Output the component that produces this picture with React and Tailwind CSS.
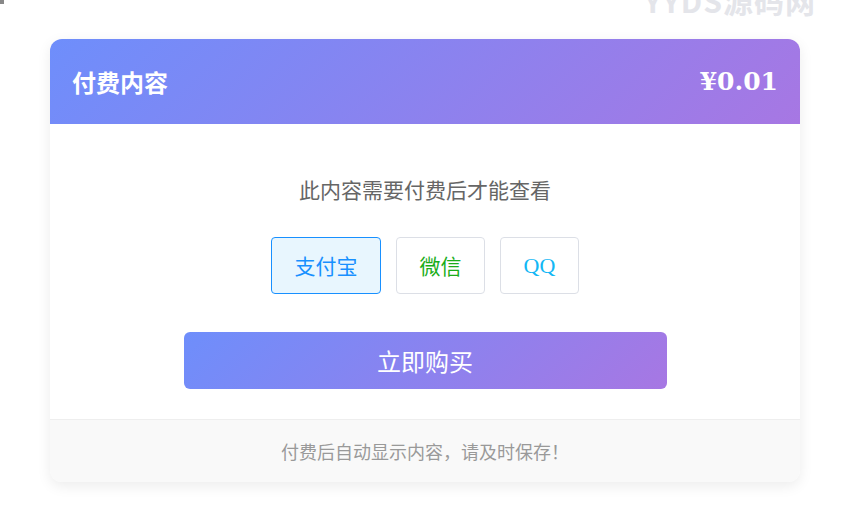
import React, { useState } from 'react'

const methods = [
  { id: 'alipay', label: '支付宝', w: 'w-[110px]', color: 'text-[#1890ff]' },
  { id: 'wechat', label: '微信', w: 'w-[89px]', color: 'text-[#1aad19]' },
  { id: 'qq', label: 'QQ', w: 'w-[79px]', color: 'text-[#12b7f5]' },
]

export default function App() {
  const [active, setActive] = useState('alipay')

  return (
    <div className="relative w-[854px] h-[525px] bg-white overflow-hidden font-['Noto_Sans_CJK_SC','Noto_Sans',sans-serif]">
      {/* watermark */}
      <div className="absolute right-[38px] top-[-22px] text-[30px] font-bold text-[#e4e5ea] tracking-[1px] select-none">
        YYDS源码网
      </div>
      <div className="absolute left-0 top-0 w-[4px] h-[4px] bg-[#888]"></div>

      <div className="ml-[50px] pt-[39px] w-[750px]">
        <div className="rounded-[12px] overflow-hidden bg-white shadow-[0_4px_14px_rgba(0,0,0,0.08)]">
          <div className="h-[85px] flex items-center justify-between px-[22px] bg-[linear-gradient(135deg,#6e8efb,#a777e3)] text-white">
            <h2 className="text-[24px] font-bold">付费内容</h2>
            <span className="text-[25px] font-bold font-['DejaVu_Serif',serif]">¥0.01</span>
          </div>

          <div className="pt-[50px] pb-[30px] flex flex-col items-center">
            <p className="text-[21px] leading-[30px] text-[#666]">此内容需要付费后才能查看</p>

            <div className="mt-[33px] flex gap-[15px]">
              {methods.map((m) => (
                <button
                  key={m.id}
                  onClick={() => setActive(m.id)}
                  className={`h-[57px] ${m.w} rounded-[4px] border text-[21px] ${m.color} ${
                    m.id === 'qq' ? "font-['Liberation_Serif',serif] text-[22px]" : ''
                  } ${active === m.id ? 'border-[#1890ff] bg-[#e8f6fe]' : 'border-[#dcdfe6] bg-white'}`}
                >
                  {m.label}
                </button>
              ))}
            </div>

            <button className="mt-[38px] w-[483px] h-[57px] rounded-[6px] bg-[linear-gradient(135deg,#6e8efb,#a777e3)] text-white text-[24px]">
              立即购买
            </button>
          </div>

          <div className="h-[63px] border-t border-[#eee] bg-[#f9f9f9] flex items-center justify-center text-[18px] text-[#999]">
            付费后自动显示内容，请及时保存！
          </div>
        </div>
      </div>
    </div>
  )
}
